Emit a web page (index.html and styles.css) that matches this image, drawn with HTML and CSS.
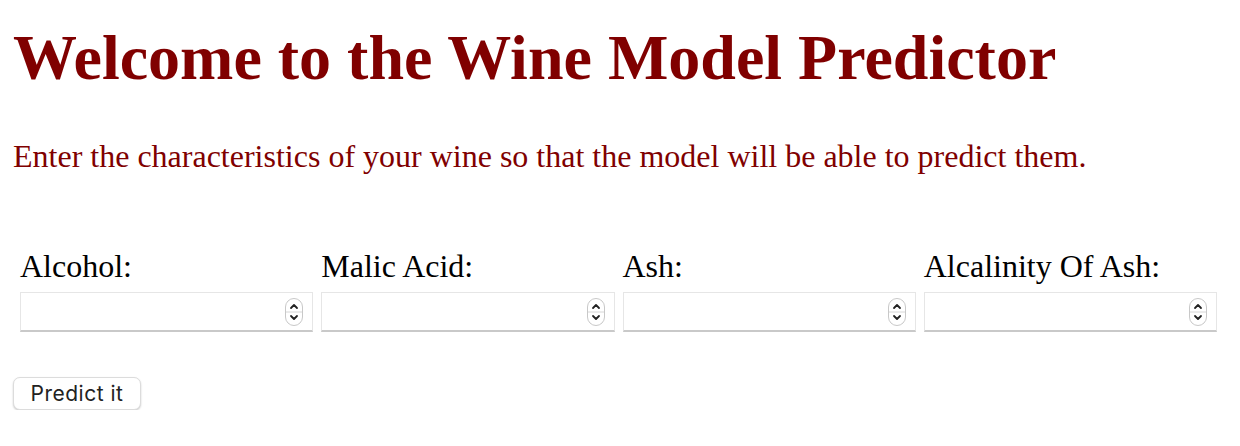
FILE: index.html
```html
<!DOCTYPE html>
<html lang="en">
<head>
<meta charset="utf-8">
<title>Wine Model Predictor</title>
<link rel="stylesheet" href="styles.css">
</head>
<body>
<h1 class="title">Welcome to the Wine Model Predictor</h1>
<p class="intro">Enter the characteristics of your wine so that the model will be able to predict them.</p>
<form class="form">
  <div class="fields">
    <div class="field">
      <label class="label" for="alcohol">Alcohol:</label>
      <div class="box"><input class="input" id="alcohol" type="text"><span class="spin"><svg viewBox="0 0 18 28" width="18" height="28"><rect x="0.5" y="0.5" width="17" height="27" rx="8.5" fill="#fff" stroke="#c8c8c8"/><line x1="1" y1="14" x2="17" y2="14" stroke="#d6d6d6"/><path d="M6 10 L9 7 L12 10" fill="none" stroke="#222" stroke-width="1.8" stroke-linecap="round" stroke-linejoin="round"/><path d="M6 18 L9 21 L12 18" fill="none" stroke="#222" stroke-width="1.8" stroke-linecap="round" stroke-linejoin="round"/></svg></span></div>
    </div>
    <div class="field">
      <label class="label" for="malic">Malic Acid:</label>
      <div class="box"><input class="input" id="malic" type="text"><span class="spin"><svg viewBox="0 0 18 28" width="18" height="28"><rect x="0.5" y="0.5" width="17" height="27" rx="8.5" fill="#fff" stroke="#c8c8c8"/><line x1="1" y1="14" x2="17" y2="14" stroke="#d6d6d6"/><path d="M6 10 L9 7 L12 10" fill="none" stroke="#222" stroke-width="1.8" stroke-linecap="round" stroke-linejoin="round"/><path d="M6 18 L9 21 L12 18" fill="none" stroke="#222" stroke-width="1.8" stroke-linecap="round" stroke-linejoin="round"/></svg></span></div>
    </div>
    <div class="field">
      <label class="label" for="ash">Ash:</label>
      <div class="box"><input class="input" id="ash" type="text"><span class="spin"><svg viewBox="0 0 18 28" width="18" height="28"><rect x="0.5" y="0.5" width="17" height="27" rx="8.5" fill="#fff" stroke="#c8c8c8"/><line x1="1" y1="14" x2="17" y2="14" stroke="#d6d6d6"/><path d="M6 10 L9 7 L12 10" fill="none" stroke="#222" stroke-width="1.8" stroke-linecap="round" stroke-linejoin="round"/><path d="M6 18 L9 21 L12 18" fill="none" stroke="#222" stroke-width="1.8" stroke-linecap="round" stroke-linejoin="round"/></svg></span></div>
    </div>
    <div class="field">
      <label class="label" for="alcalinity">Alcalinity Of Ash:</label>
      <div class="box"><input class="input" id="alcalinity" type="text"><span class="spin"><svg viewBox="0 0 18 28" width="18" height="28"><rect x="0.5" y="0.5" width="17" height="27" rx="8.5" fill="#fff" stroke="#c8c8c8"/><line x1="1" y1="14" x2="17" y2="14" stroke="#d6d6d6"/><path d="M6 10 L9 7 L12 10" fill="none" stroke="#222" stroke-width="1.8" stroke-linecap="round" stroke-linejoin="round"/><path d="M6 18 L9 21 L12 18" fill="none" stroke="#222" stroke-width="1.8" stroke-linecap="round" stroke-linejoin="round"/></svg></span></div>
    </div>
  </div>
  <button class="button" type="button">Predict it</button>
</form>
</body>
</html>
```

FILE: styles.css
```css
html, body {
  margin: 0;
  padding: 0;
  background: #fff;
}
body {
  padding: 0 13px;
  font-family: "Liberation Serif", "Times New Roman", serif;
  color: #000;
}
.title {
  margin: 0;
  padding-top: 18px;
  font-size: 64px;
  line-height: 80px;
  font-weight: bold;
  color: #800000;
}
.intro {
  margin: 0;
  padding-top: 38px;
  font-size: 32px;
  line-height: 40px;
  color: #800000;
}
.form {
  margin: 0;
  padding-top: 72px;
}
.fields {
  display: grid;
  grid-template-columns: repeat(4, 1fr);
  column-gap: 8px;
  width: 1197px;
  padding-left: 7px;
}
.field {
  display: flex;
  flex-direction: column;
}
.label {
  font-size: 32px;
  line-height: 36px;
  margin-bottom: 8px;
}
.box {
  position: relative;
  height: 40px;
  box-sizing: border-box;
  border: 1px solid #e6e6e6;
  border-bottom: 2px solid #c9c9c9;
  background: #fff;
}
.input {
  box-sizing: border-box;
  width: 100%;
  height: 100%;
  border: 0;
  outline: none;
  padding: 0 30px 0 6px;
  background: transparent;
  font-size: 20px;
}
.spin {
  position: absolute;
  right: 9px;
  top: 5px;
  width: 18px;
  height: 28px;
  display: block;
}
.spin svg {
  display: block;
}
.button {
  margin-top: 45px;
  height: 33px;
  width: 128px;
  box-sizing: border-box;
  background: #fff;
  border: 1px solid #dcdcdc;
  border-radius: 7px;
  box-shadow: 0 1px 2px rgba(0,0,0,0.2);
  font-family: Inter, "Liberation Sans", Arial, sans-serif;
  font-size: 21px;
  letter-spacing: 0.5px;
  color: #222;
  padding: 0;
}
```
